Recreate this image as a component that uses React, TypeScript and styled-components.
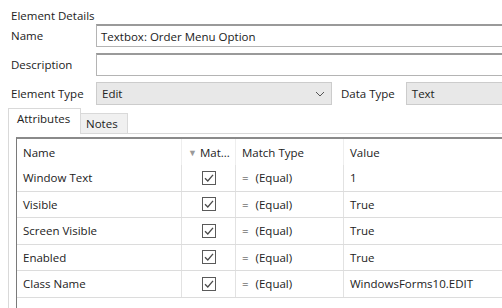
import styled, { createGlobalStyle } from 'styled-components'

const GlobalStyle = createGlobalStyle`
  html, body {
    margin: 0;
    padding: 0;
    background: #ffffff;
  }
  body {
    font-family: 'Open Sans', 'Noto Sans', sans-serif;
    font-size: 11.5px;
    color: #222;
    width: 502px;
    height: 308px;
    overflow: hidden;
  }
`

const Page = styled.div`
  display: flex;
  flex-direction: column;
  width: 502px;
  height: 308px;
  overflow: hidden;
`

const Title = styled.div`
  padding: 7px 0 0 11px;
  height: 17px;
  line-height: 17px;
`

const Form = styled.div`
  display: grid;
  grid-template-columns: 85px 1fr;
  row-gap: 6px;
  padding-left: 11px;
`

const Label = styled.div`
  display: flex;
  align-items: center;
  height: 23px;
`

const TextBox = styled.div`
  height: 23px;
  box-sizing: border-box;
  border: 1px solid #b4b4b4;
  border-top: 2px solid #9a9a9a;
  border-right: none;
  background: #fff;
  padding: 0 4px;
  display: flex;
  align-items: center;
  color: #1a1a1a;
`

const TypeRow = styled.div`
  display: flex;
  align-items: center;
  height: 23px;
`

const Select = styled.div`
  width: 236px;
  height: 23px;
  box-sizing: border-box;
  border: 1px solid #cccccc;
  background: #e8e8e8;
  display: flex;
  align-items: center;
  justify-content: space-between;
  padding: 0 6px 0 5px;
`

const SideLabel = styled.div`
  margin: 0 11px 0 9px;
`

const ReadBox = styled.div`
  flex: 1;
  height: 23px;
  box-sizing: border-box;
  border: 1px solid #cccccc;
  border-right: none;
  background: #e8e8e8;
  display: flex;
  align-items: center;
  padding: 0 5px;
`

const Tabs = styled.div`
  display: flex;
  align-items: flex-end;
  margin: 3px 0 0 8px;
  height: 26px;
`

const Tab = styled.div<{ $active?: boolean }>`
  box-sizing: border-box;
  height: ${p => (p.$active ? '26px' : '21px')};
  width: ${p => (p.$active ? '73px' : '47px')};
  border: 1px solid #d9d9d9;
  border-bottom: ${p => (p.$active ? 'none' : '1px solid #d9d9d9')};
  border-left: ${p => (p.$active ? '1px solid #d9d9d9' : 'none')};
  background: ${p => (p.$active ? '#fff' : '#f0f0f0')};
  padding: ${p => (p.$active ? '2px 0 0 8px' : '2px 0 0 5px')};
  position: relative;
  z-index: 1;
`

const Panel = styled.div`
  flex: 1;
  margin: -1px 0 0 8px;
  border-top: 1px solid #d9d9d9;
  border-left: 1px solid #d9d9d9;
  padding: 3px 0 0 7px;
`

const Grid = styled.div`
  border-top: 2px solid #8a8a8a;
  border-left: 1px solid #7a7a7a;
  height: 200px;
`

const Row = styled.div<{ $header?: boolean }>`
  display: grid;
  grid-template-columns: 164px 54px 108px 1fr;
  height: ${p => (p.$header ? '26px' : '26.5px')};
  border-bottom: ${p => (p.$header ? 'none' : '1px solid #dcdcdc')};
  box-sizing: border-box;
`

const Cell = styled.div<{ $center?: boolean; $header?: boolean }>`
  display: flex;
  align-items: center;
  justify-content: ${p => (p.$center ? 'center' : 'flex-start')};
  padding-left: ${p => (p.$center ? '0' : '6px')};
  border-left: 1px solid ${p => (p.$header ? '#eeeeee' : '#e2e2e2')};
  white-space: nowrap;
  overflow: hidden;
  &:first-child {
    border-left: none;
  }
`

const Filter = styled.span`
  color: #9a9a9a;
  font-size: 9px;
  margin-right: 3px;
`

const Eq = styled.span`
  margin-right: 7px;
  color: #333;
`

const Check = () => (
  <svg width="14" height="14" viewBox="0 0 14 14">
    <rect x="0.5" y="0.5" width="13" height="13" fill="#fff" stroke="#5a5a5a" />
    <path d="M3 7.2 L5.8 10 L11 3.8" fill="none" stroke="#4a4a4a" strokeWidth="1.3" />
  </svg>
)

const Chevron = () => (
  <svg width="10" height="6" viewBox="0 0 10 6">
    <path d="M1 1 L5 5 L9 1" fill="none" stroke="#555" strokeWidth="1" />
  </svg>
)

const rows = [
  { name: 'Window Text', value: '1' },
  { name: 'Visible', value: 'True' },
  { name: 'Screen Visible', value: 'True' },
  { name: 'Enabled', value: 'True' },
  { name: 'Class Name', value: 'WindowsForms10.EDIT' },
]

export default function App() {
  return (
    <Page>
      <GlobalStyle />
      <Title>Element Details</Title>
      <Form>
        <Label>Name</Label>
        <TextBox>Textbox: Order Menu Option</TextBox>
        <Label>Description</Label>
        <TextBox />
        <Label>Element Type</Label>
        <TypeRow>
          <Select>
            <span>Edit</span>
            <Chevron />
          </Select>
          <SideLabel>Data Type</SideLabel>
          <ReadBox>Text</ReadBox>
        </TypeRow>
      </Form>
      <Tabs>
        <Tab $active>Attributes</Tab>
        <Tab>Notes</Tab>
      </Tabs>
      <Panel>
        <Grid>
          <Row $header>
            <Cell $header>Name</Cell>
            <Cell $header>
              <Filter>▼</Filter>Mat...
            </Cell>
            <Cell $header>Match Type</Cell>
            <Cell $header>Value</Cell>
          </Row>
          {rows.map(r => (
            <Row key={r.name}>
              <Cell>{r.name}</Cell>
              <Cell $center>
                <Check />
              </Cell>
              <Cell>
                <Eq>=</Eq>(Equal)
              </Cell>
              <Cell>{r.value}</Cell>
            </Row>
          ))}
        </Grid>
      </Panel>
    </Page>
  )
}
